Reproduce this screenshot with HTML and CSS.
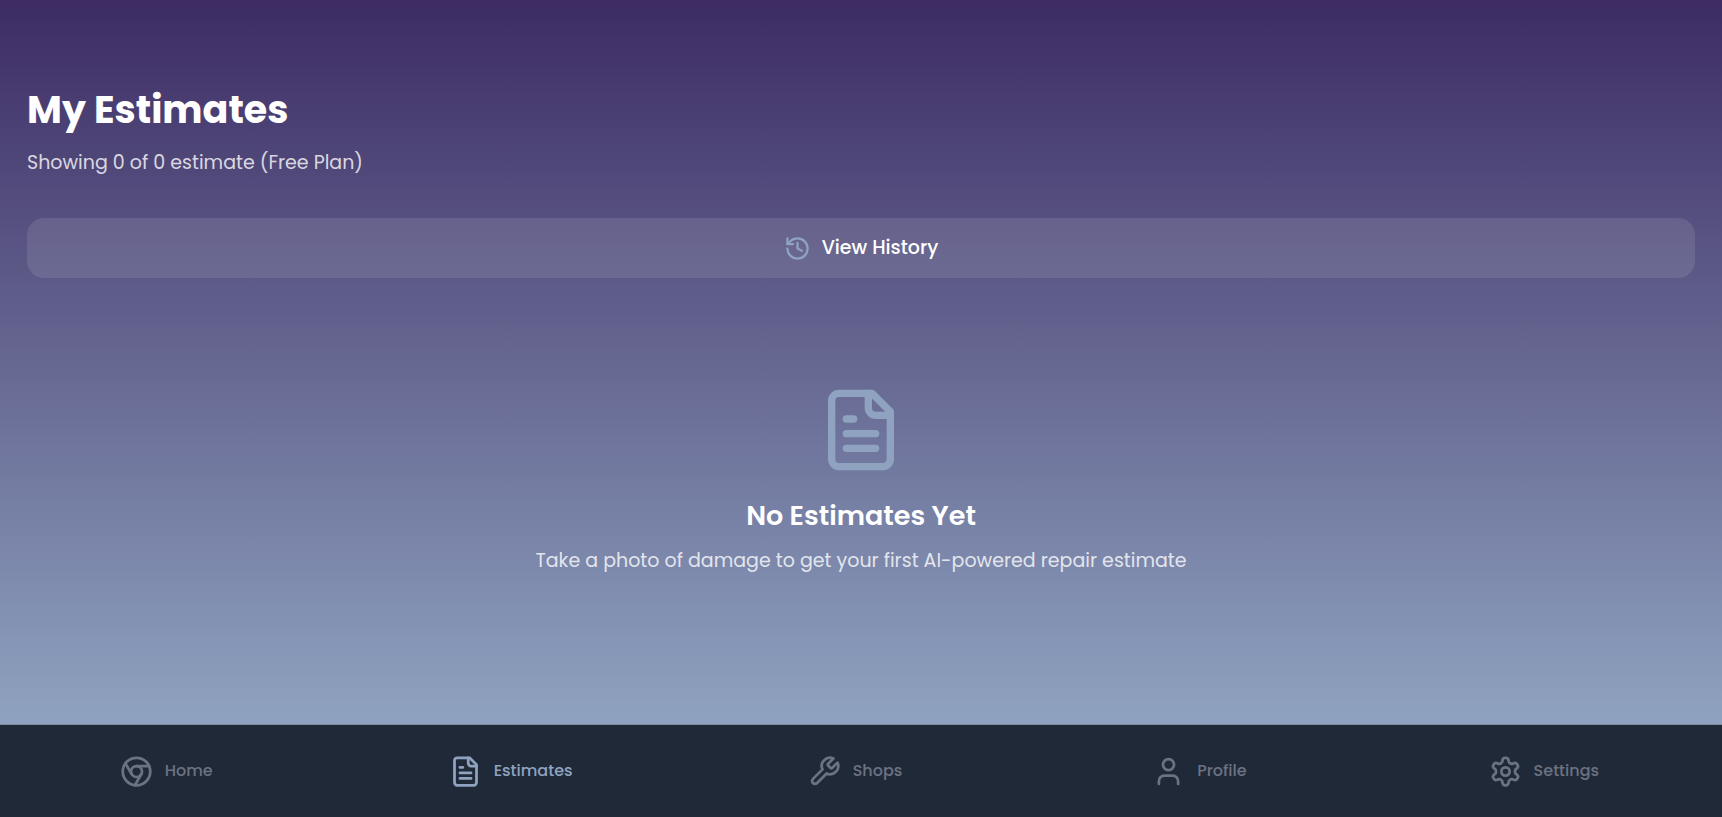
FILE: index.html
```html
<!DOCTYPE html>
<html lang="en">

	<head>
		<meta charset="utf-8">
		<title>My Estimates</title>
		<meta name="viewport" content="width=device-width, initial-scale=1.0">
		<link rel="stylesheet" href="styles.css">
	</head>

	<body>
		<main class="screen">
			<header class="header">
				<h1 class="title">My Estimates</h1>
				<p class="subtitle">Showing 0 of 0 estimate (Free Plan)</p>
			</header>

			<button class="history-btn" type="button">
				<svg class="icon icon-history" viewBox="0 0 24 24" aria-hidden="true">
					<path d="M3 12a9 9 0 1 0 9-9 9.75 9.75 0 0 0-6.74 2.74L3 8"/>
					<path d="M3 3v5h5"/>
					<path d="M12 7v5l4 2"/>
				</svg>
				<span>View History</span>
			</button>

			<section class="empty">
				<svg class="icon icon-empty" viewBox="0 0 24 24" aria-hidden="true">
					<path d="M15 2H6a2 2 0 0 0-2 2v16a2 2 0 0 0 2 2h12a2 2 0 0 0 2-2V7Z"/>
					<path d="M14 2v4a2 2 0 0 0 2 2h4"/>
					<path d="M10 9H8"/>
					<path d="M16 13H8"/>
					<path d="M16 17H8"/>
				</svg>
				<h2 class="empty-title">No Estimates Yet</h2>
				<p class="empty-text">Take a photo of damage to get your first AI-powered repair estimate</p>
			</section>
		</main>

		<nav class="tabs">
			<a class="tab" href="#home">
				<svg class="icon icon-tab" viewBox="0 0 24 24" aria-hidden="true">
					<circle cx="12" cy="12" r="10"/>
					<circle cx="12" cy="12" r="4"/>
					<path d="M21.17 8H12"/>
					<path d="M3.95 6.06L8.54 14"/>
					<path d="M10.88 21.94L15.46 14"/>
				</svg>
				<span>Home</span>
			</a>
			<a class="tab active" href="#estimates" aria-current="page">
				<svg class="icon icon-tab" viewBox="0 0 24 24" aria-hidden="true">
					<path d="M15 2H6a2 2 0 0 0-2 2v16a2 2 0 0 0 2 2h12a2 2 0 0 0 2-2V7Z"/>
					<path d="M14 2v4a2 2 0 0 0 2 2h4"/>
					<path d="M10 9H8"/>
					<path d="M16 13H8"/>
					<path d="M16 17H8"/>
				</svg>
				<span>Estimates</span>
			</a>
			<a class="tab" href="#shops">
				<svg class="icon icon-tab" viewBox="0 0 24 24" aria-hidden="true">
					<path d="M14.7 6.3a1 1 0 0 0 0 1.4l1.6 1.6a1 1 0 0 0 1.4 0l3.77-3.77a6 6 0 0 1-7.94 7.94l-6.91 6.91a2.12 2.12 0 0 1-3-3l6.91-6.91a6 6 0 0 1 7.94-7.94l-3.76 3.76z"/>
				</svg>
				<span>Shops</span>
			</a>
			<a class="tab" href="#profile">
				<svg class="icon icon-tab" viewBox="0 0 24 24" aria-hidden="true">
					<path d="M19 21v-2a4 4 0 0 0-4-4H9a4 4 0 0 0-4 4v2"/>
					<circle cx="12" cy="7" r="4"/>
				</svg>
				<span>Profile</span>
			</a>
			<a class="tab" href="#settings">
				<svg class="icon icon-tab" viewBox="0 0 24 24" aria-hidden="true">
					<path d="M12.22 2h-.44a2 2 0 0 0-2 2v.18a2 2 0 0 1-1 1.73l-.43.25a2 2 0 0 1-2 0l-.15-.08a2 2 0 0 0-2.73.73l-.22.38a2 2 0 0 0 .73 2.73l.15.1a2 2 0 0 1 1 1.72v.51a2 2 0 0 1-1 1.74l-.15.09a2 2 0 0 0-.73 2.73l.22.38a2 2 0 0 0 2.73.73l.15-.08a2 2 0 0 1 2 0l.43.25a2 2 0 0 1 1 1.73V20a2 2 0 0 0 2 2h.44a2 2 0 0 0 2-2v-.18a2 2 0 0 1 1-1.73l.43-.25a2 2 0 0 1 2 0l.15.08a2 2 0 0 0 2.73-.73l.22-.39a2 2 0 0 0-.73-2.73l-.15-.08a2 2 0 0 1-1-1.74v-.5a2 2 0 0 1 1-1.74l.15-.09a2 2 0 0 0 .73-2.73l-.22-.38a2 2 0 0 0-2.73-.73l-.15.08a2 2 0 0 1-2 0l-.43-.25a2 2 0 0 1-1-1.73V4a2 2 0 0 0-2-2z"/>
					<circle cx="12" cy="12" r="3"/>
				</svg>
				<span>Settings</span>
			</a>
		</nav>
	</body>

</html>
```

FILE: styles.css
```css
* {
	box-sizing: border-box;
}

body {
	display: flex;
	flex-direction: column;
	min-height: 100vh;
	margin: 0;
	background-color: #202937;
	font-family: Poppins, Inter, sans-serif;
	color: #fff;
}

h1, h2, p {
	margin: 0;
}

.icon {
	flex: none;
	fill: none;
	stroke: currentColor;
	stroke-width: 2;
	stroke-linecap: round;
	stroke-linejoin: round;
}

/* main screen */
.screen {
	flex: 1;
	display: flex;
	flex-direction: column;
	padding: 82px 27px 0;
	background: linear-gradient(#3d2c64, #8fa3c0);
}

.header {
	display: flex;
	flex-direction: column;
	gap: 10px;
	margin-bottom: 40px;
}

.title {
	font-size: 38px;
	line-height: 56px;
	font-weight: 700;
}

.subtitle,
.empty-text {
	font-size: 19px;
	line-height: 30px;
	color: rgba(255, 255, 255, 0.8);
}

.history-btn {
	display: flex;
	align-items: center;
	justify-content: center;
	gap: 11px;
	width: 100%;
	padding: 15px;
	border: 0;
	border-radius: 17px;
	background: rgba(255, 255, 255, 0.1);
	color: inherit;
	font: inherit;
	font-size: 19px;
	line-height: 30px;
	font-weight: 500;
	cursor: pointer;
}

.icon-history {
	width: 27px;
	height: 27px;
	color: #8fa3c0;
}

/* empty state */
.empty {
	flex: 1;
	display: flex;
	flex-direction: column;
	align-items: center;
	padding: 108px 0;
	text-align: center;
}

.icon-empty {
	width: 88px;
	height: 88px;
	margin-bottom: 22px;
	color: #8fa3c0;
}

.empty-title {
	margin-bottom: 10px;
	font-size: 27px;
	line-height: 40px;
	font-weight: 600;
}

/* bottom tabs */
.tabs {
	display: flex;
	height: 93px;
	border-top: 1px solid #8089a0;
	background-color: #202937;
}

.tab {
	flex: 1;
	display: flex;
	align-items: center;
	justify-content: center;
	gap: 12px;
	padding-right: 12px;
	color: #6b7382;
	font-size: 16px;
	line-height: 24px;
	font-weight: 500;
	text-decoration: none;
}

.tab.active {
	color: #8fa3c0;
}

.icon-tab {
	width: 33px;
	height: 33px;
}
```
